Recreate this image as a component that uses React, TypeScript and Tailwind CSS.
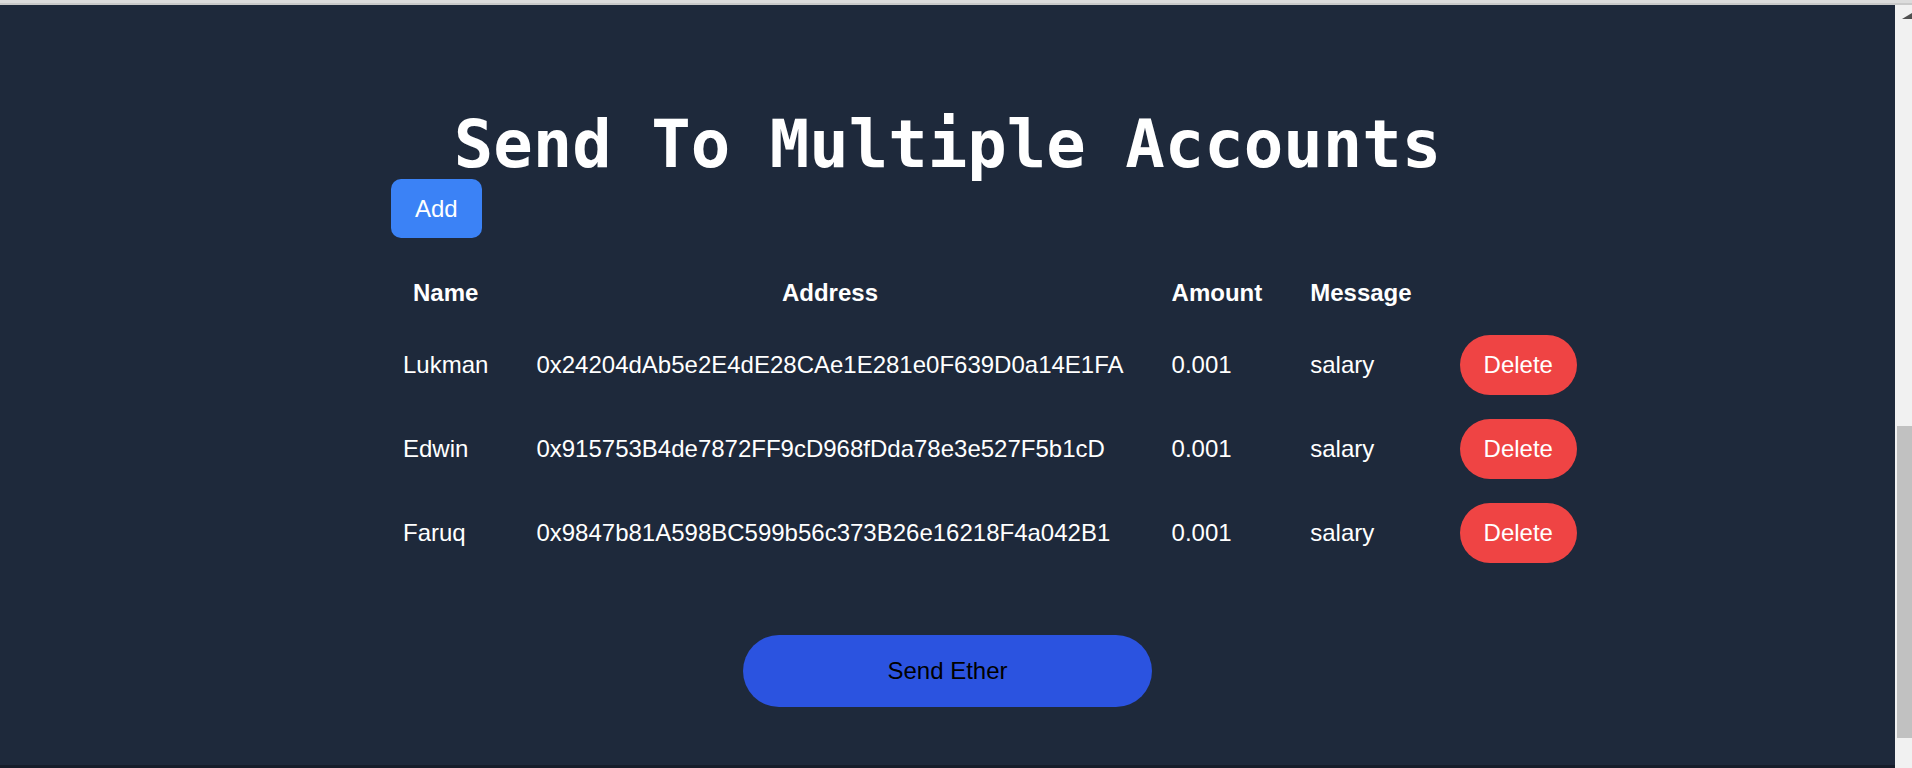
const recipients = [
  { name: "Lukman", address: "0x24204dAb5e2E4dE28CAe1E281e0F639D0a14E1FA", amount: "0.001", message: "salary" },
  { name: "Edwin", address: "0x915753B4de7872FF9cD968fDda78e3e527F5b1cD", amount: "0.001", message: "salary" },
  { name: "Faruq", address: "0x9847b81A598BC599b56c373B26e16218F4a042B1", amount: "0.001", message: "salary" },
];

function Scrollbar() {
  return (
    <div className="flex w-[17px] shrink-0 flex-col bg-[#f1f1f1]">
      <div className="flex h-[26px] items-center justify-end pb-[4px]">
        <svg width="10" height="6" viewBox="0 0 10 6" aria-hidden>
          <polygon points="0,6 10,0 10,6" fill="#505050" />
        </svg>
      </div>
      <div className="h-[395px]" />
      <div className="ml-[2px] h-[312px] bg-[#c1c1c1]" />
    </div>
  );
}

export default function App() {
  return (
    <div className="flex h-[768px] w-full flex-col overflow-hidden bg-[#1e293b] font-['Liberation_Sans',Arial,sans-serif] text-white">
      <div className="h-[3px] bg-[#dcdcdc]" />
      <div className="h-[2px] bg-[#c9c9c9]" />
      <div className="flex min-h-0 flex-1">
        <main className="flex min-w-0 flex-1 flex-col">
          <div className="flex-1">
            <h1 className="mt-[106px] h-[66px] text-center font-['DejaVu_Sans_Mono',monospace] text-[65.6px] font-bold leading-[66px]">
              Send To Multiple Accounts
            </h1>

            <div className="pl-[379px]">
              <button className="ml-[12px] mt-[2px] h-[59px] rounded-[10px] bg-[#3b82f6] px-6 text-[24px] text-white">
                Add
              </button>

              <table className="mt-[25px]">
                <thead>
                  <tr className="h-[60px]">
                    <th className="px-6 text-center text-[24px] font-bold leading-7">Name</th>
                    <th className="px-6 text-center text-[24px] font-bold leading-7">Address</th>
                    <th className="px-6 text-center text-[24px] font-bold leading-7">Amount</th>
                    <th className="px-6 text-center text-[24px] font-bold leading-7">Message</th>
                    <th className="px-6" />
                  </tr>
                </thead>
                <tbody>
                  {recipients.map((r) => (
                    <tr key={r.address} className="text-[24px] leading-7">
                      <td className="px-6 py-3 text-left">{r.name}</td>
                      <td className="px-6 py-3 text-left">{r.address}</td>
                      <td className="px-6 py-3 text-left">{r.amount}</td>
                      <td className="px-6 py-3 text-left">{r.message}</td>
                      <td className="px-6 py-3">
                        <button className="h-[60px] rounded-full bg-[#ef4444] px-6 text-[24px] text-white">
                          Delete
                        </button>
                      </td>
                    </tr>
                  ))}
                </tbody>
              </table>
            </div>

            <div className="mt-[60px] flex justify-center">
              <button className="h-[72px] w-[409px] rounded-full bg-[#2b53e0] text-[24px] text-black">
                Send Ether
              </button>
            </div>
          </div>
          <div className="h-[3px] bg-[#161d2a]" />
        </main>
        <Scrollbar />
      </div>
    </div>
  );
}
